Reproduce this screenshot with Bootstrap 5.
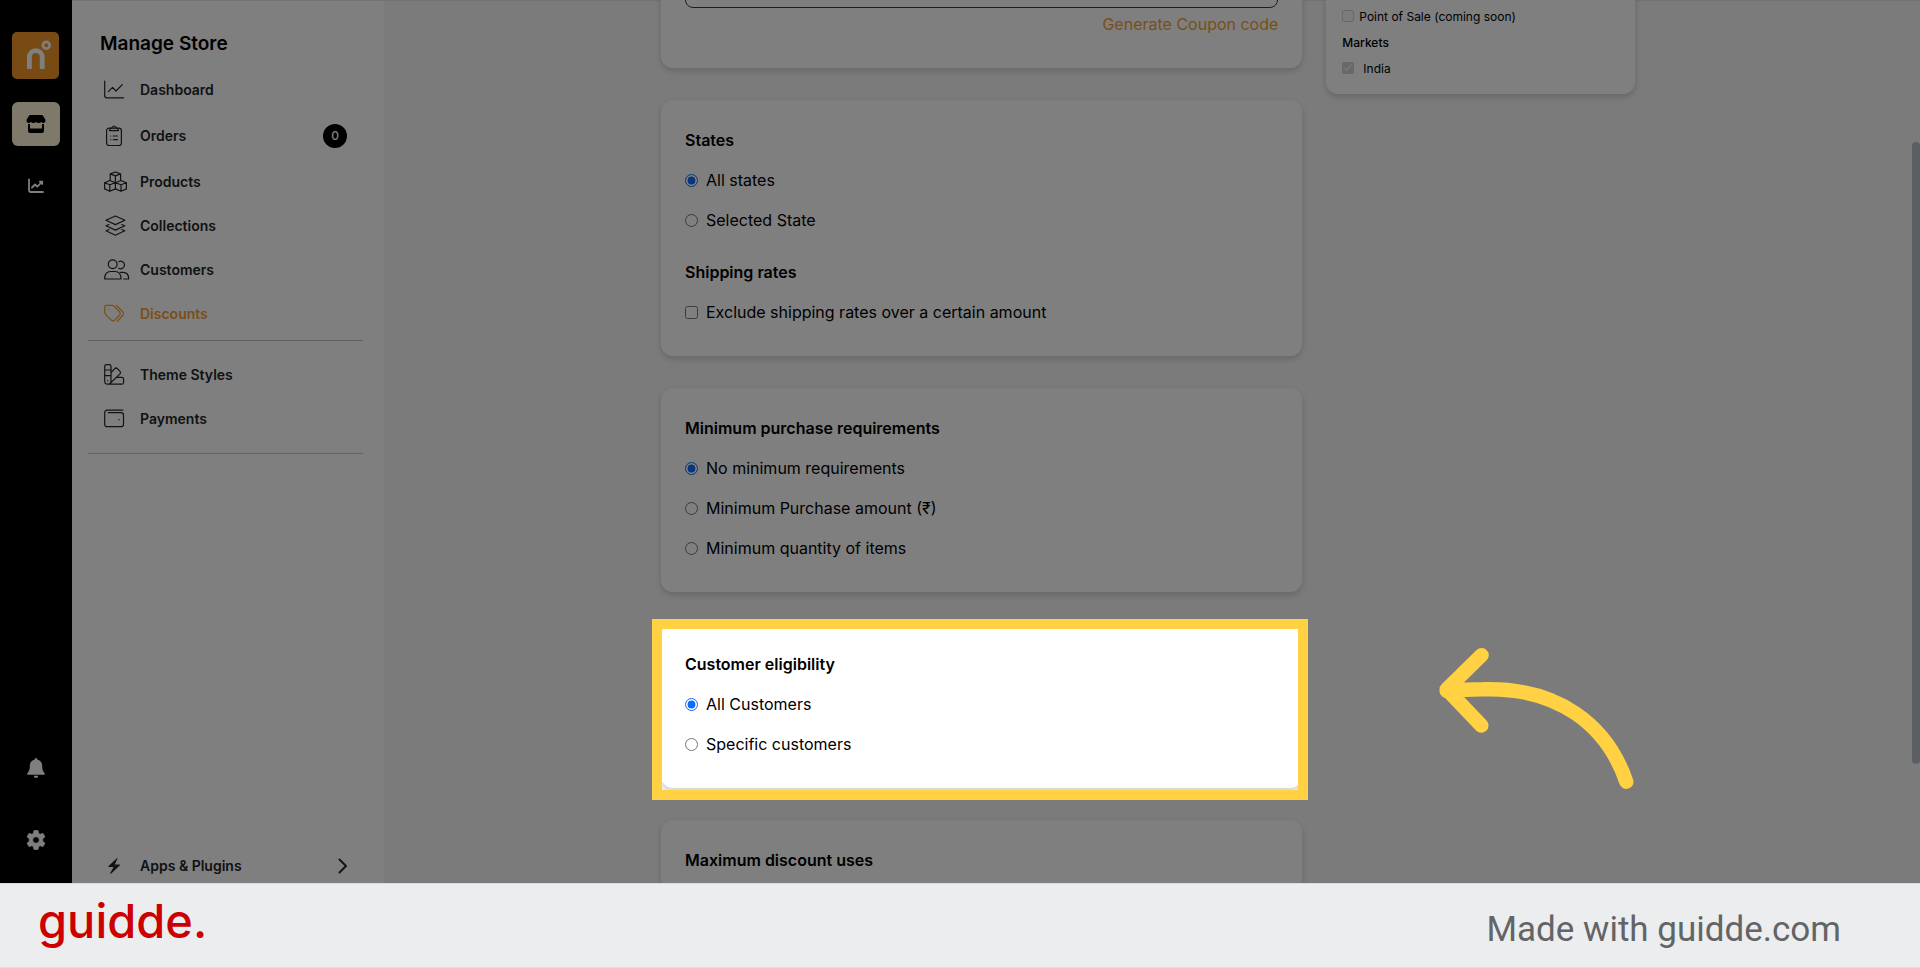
<!DOCTYPE html>
<html lang="en">
<head>
<meta charset="utf-8">
<meta name="viewport" content="width=device-width, initial-scale=1">
<title>Manage Store – Discounts</title>
<link href="https://cdn.jsdelivr.net/npm/bootstrap@5.3.0/dist/css/bootstrap.min.css" rel="stylesheet">
<script src="https://cdn.jsdelivr.net/npm/bootstrap@5.3.0/dist/js/bootstrap.bundle.min.js" defer></script>
<style>
  body { font-family: Inter, "Liberation Sans", sans-serif; font-size: 16px; line-height: 24px; color: #000; }
  .brand-orange { color: #f29f2f; }
  .app-area { min-height: 0; }

  /* icon rail */
  .rail { width: 72px; background: #000; padding: 32px 0 21px; }
  .rail button { background: none; border: 0; padding: 0; color: #fff; display: flex; align-items: center; justify-content: center; width: 48px; height: 44px; border-radius: 6px; }
  .rail button.is-current { background: #fff3d6; color: #000; margin: 23px 0 18px; }

  /* store menu */
  .side { width: 312px; border-top: 1px solid #e6e6e6; padding: 31px 21px 0 16px; }
  .side h1 { font-size: 19px; line-height: 24px; font-weight: 600; margin: 0; padding: 0 12px 12px; }
  .side-link { gap: 10px; padding: 12px 16px; font-size: 14px; line-height: 20px; font-weight: 600; color: #212529; text-decoration: none; }
  .side-link.is-current { color: #f29f2f; }
  .side-link svg { flex: none; margin: -1px 0; }
  .line-icon { fill: none; stroke: currentColor; stroke-width: 1.2; stroke-linecap: round; stroke-linejoin: round; }
  .count { width: 24px; height: 24px; background: #000; color: #fff; font-size: 12px; line-height: 24px; font-weight: 500; }
  .side hr { margin: 4px 0 12px; border: 0; height: 1px; background: #b4c0ca; opacity: 1; }
  .side hr.rule-end { margin-top: 12px; background: #c4c8cc; }
  .side-foot { margin-bottom: -5px; }

  /* scrolled form area */
  .work { background: #f6f6f6; border-top: 1px solid #e6e6e6; }
  .work-inner { max-width: 998px; padding: 0 12px; margin: -53px auto 0; }
  .panel { background: #fff; border-radius: 12px; padding: 20px 24px 24px; margin-bottom: 32px; box-shadow: 0 3px 6px rgba(0, 0, 0, .16); }
  .panel h2 { font-size: 16px; line-height: 40px; font-weight: 600; margin: 0; }
  .panel .choice + h2 { margin-top: 12px; }
  .choice { height: 40px; gap: 8px; }
  .choice input { width: 13px; height: 13px; margin: 0; accent-color: #0a6cff; }
  .coupon { height: 40px; border: 1px solid #3a3a55; border-radius: 8px; }
  .side-panel { padding: 16px; height: 146px; font-size: 12px; line-height: 26px; }
  .side-panel h2 { font-size: 12px; line-height: 26px; font-weight: 500; }
  .side-panel .form-row { gap: 5px; }
  .side-panel input { width: 12px; height: 12px; margin: 0 0 3px; }
  .thumb { width: 8px; height: 622px; margin-top: 141px; border-radius: 4px; background: #b6bec6; }

  /* spotlight: frame round one panel, everything else dimmed */
  .spotlight { position: absolute; inset: -5px -6px -12px -9px; border: 10px solid #ffd143; box-shadow: 0 0 0 3000px rgba(0, 0, 0, .5); z-index: 10; pointer-events: none; }
  .pointer-arrow { position: absolute; left: calc(100% + 136px); top: 23px; z-index: 11; pointer-events: none; }

  .credit { height: 85px; background: #ecedef; border-top: 1px solid #dcdcdc; border-bottom: 1px solid #e0e0e0; padding: 0 79px 0 38px; }
  .wordmark { color: #c00; font-size: 47px; line-height: 56px; font-weight: 500; padding-bottom: 10px; }
  .made { font-family: Roboto, sans-serif; font-size: 35px; line-height: 44px; color: #636466; padding-top: 8px; }
</style>
</head>
<body>
<div class="vh-100 d-flex flex-column overflow-hidden">
  <div class="app-area d-flex flex-grow-1 overflow-hidden position-relative">

    <nav class="rail d-flex flex-column align-items-center flex-shrink-0" aria-label="Sections">
      <svg width="48" height="47" viewBox="0 0 48 47" role="img" aria-label="Logo">
        <rect width="47" height="47" rx="5" fill="#ef9627"/>
        <path d="M17.400 37V25a6.400 6.400 0 0 1 12.800 0v12" fill="none" stroke="#fff" stroke-width="4.800"/>
        <circle cx="34.300" cy="13.300" r="3.400" fill="none" stroke="#fff" stroke-width="2.600"/>
      </svg>
      <button class="is-current" type="button" aria-label="Store">
        <svg width="20" height="18" viewBox="0 0 20 18" fill="currentColor"><path d="M4.200 0h11.600q.8 0 1.200.7L19.300 4.600Q20 7.500 17.800 8q-1.500.200-2.600-1-1.200 1.200-2.600 1T10 7Q8.800 8.200 7.400 8T4.800 7Q3.600 8.200 2.200 8 0 7.500.7 4.600L3 .7Q3.400 0 4.200 0Z"/><path d="M2 9h2v4.500h12V9h2v7q0 2-2 2H4q-2 0-2-2Z"/></svg>
      </button>
      <button type="button" aria-label="Analytics">
        <svg width="16" height="16" viewBox="0 0 16 16" fill="none" stroke="currentColor" stroke-width="1.800" stroke-linecap="round" stroke-linejoin="round"><path d="M1 1.500V12.500Q1 14 2.500 14H15M4 9.500l3-3 2.300 2.200 4.500-4.700M11.800 3.600h2.400v2.400"/></svg>
      </button>
      <button class="mt-auto mb-4" type="button" aria-label="Notifications">
        <svg width="18" height="20" viewBox="0 0 18 20" fill="currentColor"><path d="M9 0q1.200 0 1.200 1.400C14 2.200 15.200 5 15.200 8.500c0 3.500 1 5 2.400 6.700.6.900.3 1.600-.7 1.600H1.100c-1 0-1.300-.7-.7-1.600C1.800 13.500 2.800 12 2.800 8.500 2.800 5 4 2.200 7.800 1.400Q7.800 0 9 0ZM6.600 17.700h4.800Q11 20 9 20t-2.400-2.300Z"/></svg>
      </button>
      <button class="mt-1" type="button" aria-label="Settings">
        <svg width="20" height="20" viewBox="0 0 20 20" fill="currentColor" fill-rule="evenodd"><path d="M8.100.4h3.800l.7 3 1.500.9 2.900-.9 1.900 3.300-2.200 2.100v2.400l2.200 2.100-1.900 3.300-2.900-.9-1.500.9-.7 3H8.100l-.7-3-1.500-.9-2.900.9-1.900-3.300 2.200-2.100V8.800L1.100 6.700 3 3.400l2.900.9 1.500-.9ZM10 6.700a3.300 3.300 0 1 0 0 6.600 3.300 3.300 0 0 0 0-6.600Z" stroke="currentColor" stroke-width=".8" stroke-linejoin="round"/></svg>
      </button>
    </nav>

    <aside class="side d-flex flex-column flex-shrink-0 bg-white">
      <h1>Manage Store</h1>
      <a class="side-link d-flex align-items-center" href="#"><svg class="line-icon" width="26" height="22" viewBox="0 0 26 22"><path d="M.7 2v14.500Q.7 18.800 3 18.800h16.600M4.300 12.600l4.300-4.300L12 12l6.300-6.400"/></svg>Dashboard</a>
      <a class="side-link d-flex align-items-center" href="#"><svg class="line-icon" width="26" height="22" viewBox="0 0 26 22"><rect x="2.600" y="3.200" width="14.800" height="17.300" rx="2.500"/><path d="M5.500 5.600Q5.500 3.700 7.600 3.100 8.300 1 10 1t2.400 2.100q2.100.6 2.100 2.500ZM6.700 11h.1M9.300 11h4.200M6.700 14.700h.1M9.300 14.700h4.200M10 3.200h.1"/></svg>Orders<span class="count rounded-circle text-center ms-auto">0</span></a>
      <a class="side-link d-flex align-items-center" href="#"><svg class="line-icon" width="26" height="22" viewBox="0 0 26 22"><path d="M11.400 1l5.200 1.900v5.800M6.200 8.700V2.900L11.400 1M6.200 2.900l5.200 2 5.200-2M11.400 4.900v5.500M5.800 9.500L11.400 11.700v6.200l-5.600 2.400-5.200-2.400v-6.200ZM.6 11.700l5.200 2 5.600-2M5.800 13.700v6.600M17 9.500l5.400 2.200v6.200L17 20.300l-5.600-2.400M11.400 11.700L17 9.500M11.400 11.700l5.600 2 5.400-2M17 13.700v6.600"/></svg>Products</a>
      <a class="side-link d-flex align-items-center" href="#"><svg class="line-icon" width="26" height="22" viewBox="0 0 26 22"><path d="M11.400 1L20.900 5.200 11.400 9.600 1.900 5.200ZM5 9.500l-3 1.300 9.400 4.300 9.400-4.300-3-1.300M5 14.500l-3 1.300 9.400 4.400 9.400-4.400-3-1.300"/></svg>Collections</a>
      <a class="side-link d-flex align-items-center" href="#"><svg class="line-icon" width="26" height="22" viewBox="0 0 26 22"><circle cx="8.700" cy="5.300" r="4.400"/><path d="M14.800 2.700a3.800 3.800 0 1 1 0 6.600M.7 20Q.7 12.500 6.500 12.500h4.600Q17 12.500 17 20ZM16.500 13.300h2.600q5.600 0 5.600 6.700h-5"/></svg>Customers</a>
      <a class="side-link is-current d-flex align-items-center" href="#" aria-current="page"><svg class="line-icon" width="26" height="22" viewBox="0 0 26 22"><path d="M2.600 2.400H8q1.100 0 2 .8L15.700 9q1.300 1.500 0 3l-5.100 5.300q-1.600 1.300-3.100 0L1.600 11.400Q.7 10.500.7 9.300v-5Q.7 2.400 2.600 2.400ZM12.500 2.500L19 9q1.300 1.500 0 3l-5.700 6.300M4.500 6h.1"/></svg>Discounts</a>
      <hr>
      <a class="side-link d-flex align-items-center" href="#"><svg class="line-icon" width="26" height="22" viewBox="0 0 26 22"><path d="M2.500.7h2.700Q7 .7 7 2.500V17q0 3.200-3.200 3.200T.7 17V2.500Q.7.7 2.500.7ZM.7 6H7M.7 11.700H7M3.600 16.700h.1M7 8.500l3.800-3.900q1.300-1.200 2.600 0l2.600 2.700q1.200 1.300 0 2.600L6 19.500M12.800 13.300h5q1.800 0 1.800 1.800v3.300q0 1.800-1.800 1.800H3.800"/></svg>Theme Styles</a>
      <a class="side-link d-flex align-items-center" href="#"><svg class="line-icon" width="26" height="22" viewBox="0 0 26 22"><path d="M18.800 2.200H3.200Q.7 2.200.7 4.700v11.500q0 2.500 2.500 2.500H17q2.500 0 2.500-2.500v-9Q19.500 4.700 17 4.700H4.300M15 11.700h.2"/></svg>Payments</a>
      <hr class="rule-end">
      <div class="side-foot mt-auto">
        <a class="side-link d-flex align-items-center" href="#"><svg width="26" height="22" viewBox="0 0 26 22" fill="currentColor"><path d="M13.700 3Q14 2.500 13.200 3L4.500 11q-.4.900.4 1h4.700L6.200 18.300q0 .7.800.4L16 10.300q.3-.9-.5-.9h-4.700Z"/></svg>Apps &amp; Plugins<svg class="ms-auto" width="9" height="16" viewBox="0 0 9 16" fill="none" stroke="currentColor" stroke-width="1.900" stroke-linecap="round" stroke-linejoin="round"><path d="M1.500 1.500L8 8l-6.500 6.500"/></svg></a>
      </div>
    </aside>

    <main class="work flex-grow-1 d-flex align-items-start">
      <div class="flex-grow-1">
        <div class="work-inner">
          <div class="row">
            <div class="col-8">
              <section class="panel">
                <input class="coupon w-100 d-block px-3" type="text" aria-label="Coupon code">
                <div class="text-end mt-1 mb-2"><a class="brand-orange text-decoration-none" href="#">Generate Coupon code</a></div>
              </section>

              <section class="panel">
                <h2>States</h2>
                <div class="choice d-flex align-items-center"><input type="radio" name="states" id="st-all" checked><label for="st-all">All states</label></div>
                <div class="choice d-flex align-items-center"><input type="radio" name="states" id="st-sel"><label for="st-sel">Selected State</label></div>
                <h2>Shipping rates</h2>
                <div class="choice d-flex align-items-center"><input type="checkbox" id="ship"><label for="ship">Exclude shipping rates over a certain amount</label></div>
              </section>

              <section class="panel">
                <h2>Minimum purchase requirements</h2>
                <div class="choice d-flex align-items-center"><input type="radio" name="minimum" id="min-no" checked><label for="min-no">No minimum requirements</label></div>
                <div class="choice d-flex align-items-center"><input type="radio" name="minimum" id="min-amt"><label for="min-amt">Minimum Purchase amount (₹)</label></div>
                <div class="choice d-flex align-items-center"><input type="radio" name="minimum" id="min-qty"><label for="min-qty">Minimum quantity of items</label></div>
              </section>

              <section class="panel position-relative">
                <h2>Customer eligibility</h2>
                <div class="choice d-flex align-items-center"><input type="radio" name="who" id="who-all" checked><label for="who-all">All Customers</label></div>
                <div class="choice d-flex align-items-center"><input type="radio" name="who" id="who-some"><label for="who-some">Specific customers</label></div>
                <div class="spotlight"></div>
                <svg class="pointer-arrow" width="200" height="146" viewBox="38 28 200 146" fill="none" stroke="#ffd143" stroke-width="14.400" stroke-linecap="round" stroke-linejoin="round" aria-hidden="true"><path d="M81.600 36.200L46.700 70.300l34.600 36.200M46.700 72Q64 70.300 83 70.300C158 68 207 106 226.300 162.700"/></svg>
              </section>

              <section class="panel">
                <h2>Maximum discount uses</h2>
              </section>
            </div>

            <div class="col-4">
              <section class="panel side-panel d-flex flex-column justify-content-end pb-2">
                <div class="form-row d-flex align-items-center"><input type="checkbox" id="pos" disabled><label for="pos">Point of Sale (coming soon)</label></div>
                <h2>Markets</h2>
                <div class="form-row d-flex align-items-center mb-1"><input type="checkbox" id="india" class="me-1" checked disabled><label for="india">India</label></div>
              </section>
            </div>
          </div>
        </div>
      </div>
      <div class="thumb flex-shrink-0"></div>
    </main>
  </div>

  <footer class="credit d-flex align-items-center justify-content-between flex-shrink-0">
    <div class="wordmark">guidde.</div>
    <div class="made">Made with guidde.com</div>
  </footer>
</div>
</body>
</html>
